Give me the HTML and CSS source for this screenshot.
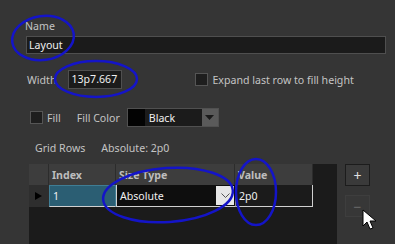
FILE: index.html
```html
<!DOCTYPE html>
<html>
<head>
    <title>Layout Properties</title>
    <link rel="stylesheet" href="styles.css">
</head>
<body>
    <div class="panel">
        <div class="label name-label">Name</div>
        <div class="textbox name-input">Layout</div>

        <div class="row width-row">
            <span class="label">Width</span>
            <div class="textbox width-input">13p7.667</div>
            <label class="check expand-check"><span class="box"></span>Expand last row to fill height</label>
        </div>

        <div class="row fill-row">
            <label class="check"><span class="box"></span>Fill</label>
            <span class="label fill-color-label">Fill Color</span>
            <div class="color-select">
                <span class="swatch"></span>
                <span class="color-name">Black</span>
                <span class="drop-btn"><svg width="9" height="5" viewBox="0 0 9 5"><path d="M0 0h9L4.5 5z" fill="#1a1a1a"/></svg></span>
            </div>
        </div>

        <div class="row rows-info">
            <span class="label">Grid Rows</span>
            <span class="label rows-value">Absolute: 2p0</span>
        </div>

        <div class="grid-area">
            <div class="grid">
                <div class="grid-head">
                    <div class="cell rowhead"></div>
                    <div class="cell col-index">Index</div>
                    <div class="cell col-type">Size Type</div>
                    <div class="cell col-value">Value</div>
                </div>
                <div class="grid-row">
                    <div class="cell rowhead"><svg width="7" height="8" viewBox="0 0 7 8"><path d="M0 0l7 4-7 4z" fill="#000"/></svg></div>
                    <div class="cell col-index selected">1</div>
                    <div class="cell col-type editing">
                        <span>Absolute</span>
                        <span class="combo-btn"><svg width="9" height="5" viewBox="0 0 9 5"><path d="M0.5 0.5l4 4 4-4" fill="none" stroke="#555" stroke-width="1"/></svg></span>
                    </div>
                    <div class="cell col-value value-cell">2p0</div>
                </div>
            </div>
            <div class="side-buttons">
                <div class="btn">+</div>
                <div class="btn disabled">&minus;</div>
            </div>
        </div>
    </div>

    <!-- annotation marks drawn over the screenshot -->
    <svg class="marks" width="395" height="244" viewBox="0 0 395 244">
        <g fill="none" stroke="#1414c8" stroke-width="2.5">
            <ellipse cx="43" cy="38" rx="31" ry="22" transform="rotate(-8 43 38)"/>
            <ellipse cx="96" cy="79" rx="41" ry="18"/>
            <ellipse cx="168" cy="195" rx="65" ry="27" transform="rotate(-4 168 195)"/>
            <ellipse cx="256" cy="192" rx="20" ry="33"/>
        </g>
        <path d="M363 210v16l4-4 3 7 3-1-3-7h6z" fill="#fff" stroke="#000" stroke-width="1"/>
    </svg>
</body>
</html>
```

FILE: styles.css
```css
body {
    margin: 0;
    background: #353535;
    font-family: "Noto Sans", "DejaVu Sans", sans-serif;
    font-size: 10.6px;
    color: #c8c8c8;
    width: 395px;
    height: 244px;
    overflow: hidden;
}
.panel {
    padding: 19px 0 0 25px;
}
.label {
    color: #c4c4c4;
}
.name-label {
    height: 15px;
    line-height: 15px;
}
.textbox {
    background: #1b1b1b;
    border: 1px solid #4f4f4f;
    color: #f0f0f0;
    box-sizing: border-box;
    padding-left: 2px;
}
.name-input {
    margin: 2px 0 0 1px;
    width: 360px;
    height: 18px;
    line-height: 16px;
}
.row {
    display: flex;
    align-items: center;
}
.width-row {
    margin-top: 16px;
    height: 19px;
    padding-left: 2px;
}
.width-input {
    margin-left: 12px;
    width: 54px;
    height: 19px;
    line-height: 17px;
}
.check {
    display: flex;
    align-items: center;
    gap: 4px;
    color: #c4c4c4;
}
.box {
    width: 11px;
    height: 11px;
    background: #1e1e1e;
    border: 1px solid #555;
}
.expand-check {
    margin-left: 73px;
}
.fill-row {
    margin-top: 19px;
    height: 19px;
    padding-left: 5px;
}
.fill-color-label {
    margin-left: 16px;
}
.color-select {
    margin-left: 7px;
    width: 92px;
    height: 19px;
    box-sizing: border-box;
    border: 1px solid #505050;
    background: #1b1b1b;
    display: flex;
    align-items: center;
}
.swatch {
    width: 17px;
    height: 17px;
    background: #030303;
}
.color-name {
    flex: 1;
    padding-left: 4px;
    color: #f0f0f0;
}
.drop-btn {
    width: 16px;
    height: 17px;
    background: #5a5a5a;
    display: flex;
    align-items: center;
    justify-content: center;
}
.rows-info {
    margin-top: 14px;
    height: 14px;
    padding-left: 10px;
}
.rows-value {
    margin-left: 16px;
}
.grid-area {
    margin: 9px 0 0 4px;
    display: flex;
    align-items: flex-start;
}
.grid {
    width: 308px;
    height: 80px;
    background: #1b1b1b;
}
.grid-head, .grid-row {
    display: flex;
}
.cell {
    box-sizing: border-box;
    display: flex;
    align-items: center;
    padding-left: 3px;
    height: 21px;
}
.grid-head .cell {
    background: #3d3d3d;
    border-right: 1px solid #2c2c2c;
    color: #bdbdbd;
    font-weight: bold;
}
.rowhead {
    width: 20px;
}
.grid-row .rowhead {
    background: #2e2e2e;
    padding-left: 6px;
    height: 22px;
}
.col-index {
    width: 67px;
}
.col-type {
    width: 119px;
}
.col-value {
    width: 78px;
}
.grid-row .cell {
    height: 22px;
    border-bottom: 1px solid #d0d0d0;
    color: #f0f0f0;
}
.grid-row .rowhead {
    border-bottom: none;
}
.selected {
    background: #2b5e73;
    border: 1px solid #3f7d94;
    color: #cfe3ea;
}
.editing {
    background: #0e0e0e;
    border-left: 1px solid #d0d0d0;
    justify-content: space-between;
    padding-right: 1px;
}
.combo-btn {
    width: 18px;
    height: 19px;
    background: #e6e6e6;
    display: flex;
    align-items: center;
    justify-content: center;
}
.value-cell {
    border-right: 1px solid #d0d0d0;
    border-left: 1px solid #888;
}
.side-buttons {
    margin-left: 8px;
    display: flex;
    flex-direction: column;
    gap: 9px;
}
.btn {
    width: 25px;
    height: 22px;
    box-sizing: border-box;
    border: 1px solid #1c1c1c;
    background: #3a3a3a;
    color: #e0e0e0;
    display: flex;
    align-items: center;
    justify-content: center;
    font-size: 14px;
}
.btn.disabled {
    border-color: #3e3e3e;
    background: #373737;
    color: #6a6a6a;
}
.marks {
    position: absolute;
    left: 0;
    top: 0;
}
```
